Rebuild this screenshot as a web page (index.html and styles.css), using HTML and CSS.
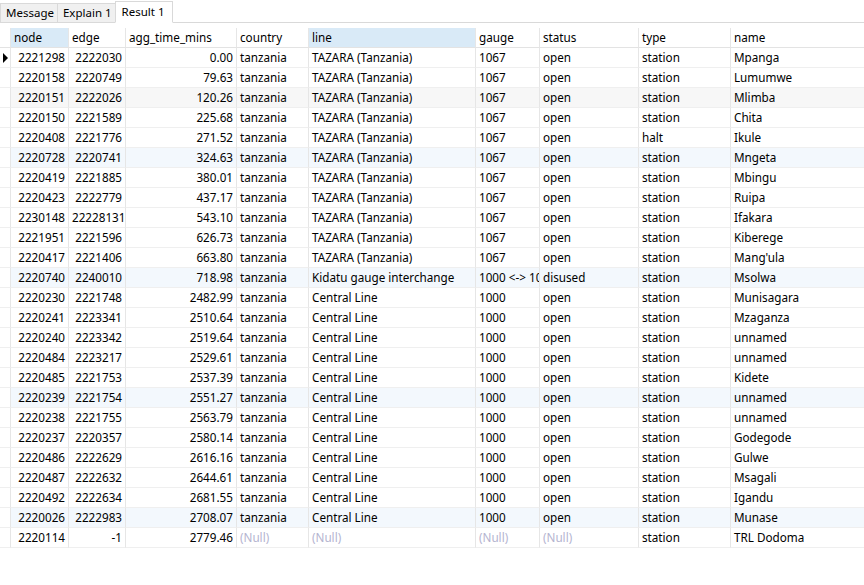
FILE: index.html
```html
<!DOCTYPE html>
<html>
<head>
<meta charset="utf-8">
<link rel="stylesheet" href="styles.css">
</head>
<body>
<div class="tabs">
  <div class="tab">Message</div>
  <div class="tab">Explain 1</div>
  <div class="tab active">Result 1</div>
  <div class="tab-fill"></div>
</div>
<div class="grid" id="grid">
  <div class="row head">
    <div class="c ind"></div>
    <div class="c node sel">node</div>
    <div class="c edge">edge</div>
    <div class="c agg">agg_time_mins</div>
    <div class="c country">country</div>
    <div class="c line sel">line</div>
    <div class="c gauge">gauge</div>
    <div class="c status">status</div>
    <div class="c type">type</div>
    <div class="c name">name</div>
  </div>
</div>
<script src="app.js"></script>
</body>
</html>
```
FILE: app.js
```js
var rows = [
["2221298","2222030","0.00","tanzania","TAZARA (Tanzania)","1067","open","station","Mpanga"],
["2220158","2220749","79.63","tanzania","TAZARA (Tanzania)","1067","open","station","Lumumwe"],
["2220151","2222026","120.26","tanzania","TAZARA (Tanzania)","1067","open","station","Mlimba"],
["2220150","2221589","225.68","tanzania","TAZARA (Tanzania)","1067","open","station","Chita"],
["2220408","2221776","271.52","tanzania","TAZARA (Tanzania)","1067","open","halt","Ikule"],
["2220728","2220741","324.63","tanzania","TAZARA (Tanzania)","1067","open","station","Mngeta"],
["2220419","2221885","380.01","tanzania","TAZARA (Tanzania)","1067","open","station","Mbingu"],
["2220423","2222779","437.17","tanzania","TAZARA (Tanzania)","1067","open","station","Ruipa"],
["2230148","22228131","543.10","tanzania","TAZARA (Tanzania)","1067","open","station","Ifakara"],
["2221951","2221596","626.73","tanzania","TAZARA (Tanzania)","1067","open","station","Kiberege"],
["2220417","2221406","663.80","tanzania","TAZARA (Tanzania)","1067","open","station","Mang'ula"],
["2220740","2240010","718.98","tanzania","Kidatu gauge interchange","1000 <-> 1067","disused","station","Msolwa"],
["2220230","2221748","2482.99","tanzania","Central Line","1000","open","station","Munisagara"],
["2220241","2223341","2510.64","tanzania","Central Line","1000","open","station","Mzaganza"],
["2220240","2223342","2519.64","tanzania","Central Line","1000","open","station","unnamed"],
["2220484","2223217","2529.61","tanzania","Central Line","1000","open","station","unnamed"],
["2220485","2221753","2537.39","tanzania","Central Line","1000","open","station","Kidete"],
["2220239","2221754","2551.27","tanzania","Central Line","1000","open","station","unnamed"],
["2220238","2221755","2563.79","tanzania","Central Line","1000","open","station","unnamed"],
["2220237","2220357","2580.14","tanzania","Central Line","1000","open","station","Godegode"],
["2220486","2222629","2616.16","tanzania","Central Line","1000","open","station","Gulwe"],
["2220487","2222632","2644.61","tanzania","Central Line","1000","open","station","Msagali"],
["2220492","2222634","2681.55","tanzania","Central Line","1000","open","station","Igandu"],
["2220026","2222983","2708.07","tanzania","Central Line","1000","open","station","Munase"],
["2220114","-1","2779.46",null,null,null,null,"station","TRL Dodoma"]
];
var cls = ["node","edge","agg","country","line","gauge","status","type","name"];
var grid = document.getElementById("grid");
rows.forEach(function (r, i) {
  var row = document.createElement("div");
  row.className = "row";
  if (i === 2) row.className += " gray";
  if (i % 6 === 5) row.className += " blue";
  var ind = document.createElement("div");
  ind.className = "c ind";
  if (i === 0) { ind.innerHTML = '<span class="arrow"></span>'; }
  row.appendChild(ind);
  r.forEach(function (v, j) {
    var c = document.createElement("div");
    c.className = "c " + cls[j];
    if (v === null) { c.className += " null"; c.textContent = "(Null)"; }
    else c.textContent = v;
    row.appendChild(c);
  });
  grid.appendChild(row);
});
```
FILE: styles.css
```css
html, body {
  margin: 0;
  padding: 0;
  background: #fff;
  overflow: hidden;
}
body {
  font-family: "Noto Sans", "Open Sans", sans-serif;
  font-size: 11.7px;
  color: #000;
  width: 864px;
  height: 585px;
}
.tabs {
  display: flex;
  align-items: flex-end;
  height: 23px;
}
.tab {
  box-sizing: border-box;
  height: 20px;
  line-height: 18px;
  padding: 0 3px 0 5px;
  background: #f0f0f0;
  border: 1px solid #d9d9d9;
  border-right: none;
  color: #000;
  white-space: nowrap;
  font-size: 11.5px;
  flex: none;
}
.tab.active {
  height: 22px;
  line-height: 20px;
  background: #fff;
  border: 1px solid #d9d9d9;
  border-bottom: 1px solid #fff;
  padding: 0 7px 0 6px;
}
.tab-fill {
  flex: 1;
  height: 1px;
  background: #d9d9d9;
}
.grid {
  margin-top: 5px;
  width: 864px;
}
.row {
  display: flex;
  height: 20px;
}
.row.gray .c { background: #f7f7f7; }
.row.blue .c { background: #f3f8fd; }
.row.gray .c.ind, .row.blue .c.ind { background: #fff; }
.c {
  box-sizing: border-box;
  height: 20px;
  line-height: 19px;
  border-right: 1px solid #e6e6e6;
  border-bottom: 1px solid #efefef;
  padding: 0 3px;
  white-space: nowrap;
  overflow: hidden;
  flex: none;
}
.head .c {
  border-bottom: 1px solid #e3e3e3;
  background: #fff;
}
.head .c.sel { background: #d9eaf7; }
.ind { width: 11px; padding: 0; position: relative; }
.node { width: 58px; text-align: right; }
.edge { width: 57px; text-align: right; }
.agg { width: 111px; text-align: right; }
.country { width: 72px; }
.line { width: 167px; }
.gauge { width: 64px; }
.status { width: 99px; }
.type { width: 92px; }
.name { flex: 1 1 auto; border-right: none; }
.head .c { text-align: left; }
.null { color: #b4b4d0; }
.arrow {
  position: absolute;
  left: 3px;
  top: 5px;
  width: 0;
  height: 0;
  border-top: 5px solid transparent;
  border-bottom: 5px solid transparent;
  border-left: 5px solid #000;
}
```
